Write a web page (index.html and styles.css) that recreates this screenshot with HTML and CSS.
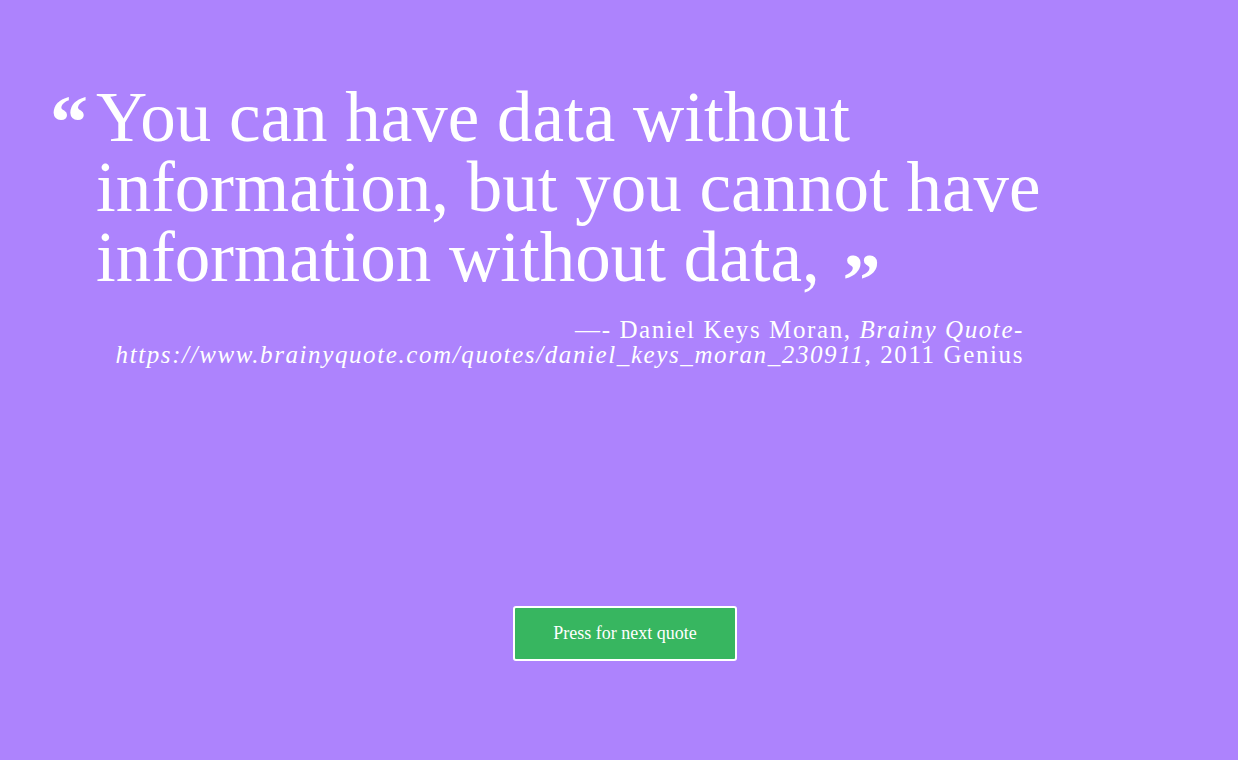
FILE: index.html
```html
<!DOCTYPE html>
<html lang="en">
<head>
<meta charset="utf-8">
<title>Random Quote</title>
<link rel="stylesheet" href="styles.css">
</head>
<body>
<main class="page">
  <section class="quote-box">
    <blockquote class="quote">
      <span class="mark mark-open">&ldquo;</span>
      <p class="quote-text">You can have data without information, but you cannot have information without data, <span class="mark mark-close">&rdquo;</span></p>
    </blockquote>
    <p class="cite">&mdash;- Daniel Keys Moran, <em>Brainy Quote-<br>https://www.brainyquote.com/quotes/daniel_keys_moran_230911</em>, 2011 Genius</p>
  </section>
  <div class="actions">
    <button class="next-btn" type="button">Press for next quote</button>
  </div>
</main>
</body>
</html>
```

FILE: styles.css
```css
html, body {
  margin: 0;
  padding: 0;
}
body {
  background: #ad83fd;
  color: #ffffff;
  font-family: "Liberation Serif", "DejaVu Serif", serif;
  min-height: 760px;
}
.page {
  display: flex;
  flex-direction: column;
  padding: 82px 0 0 50px;
}
.quote-box {
  width: 1000px;
}
.quote {
  display: flex;
  align-items: flex-start;
  gap: 8px;
  margin: 0;
}
.mark {
  font-weight: bold;
  line-height: 1;
}
.mark-open {
  font-size: 76px;
  margin-top: 2px;
}
.mark-close {
  font-size: 76px;
  line-height: 0;
  vertical-align: -25px;
  margin-left: 5px;
}
.quote-text {
  margin: 0;
  font-size: 71px;
  line-height: 70px;
  width: 990px;
}
.cite {
  margin: 25px 0 0;
  width: 974px;
  text-align: right;
  font-size: 25px;
  line-height: 25px;
  letter-spacing: 1.6px;
}
.actions {
  display: flex;
  justify-content: center;
  margin-top: 239px;
  padding-right: 38px;
}
.next-btn {
  width: 224px;
  height: 55px;
  background: #37b660;
  color: #ffffff;
  border: 2px solid #ffffff;
  border-radius: 3px;
  font-family: "Liberation Serif", "DejaVu Serif", serif;
  font-size: 18px;
  cursor: pointer;
}
```
